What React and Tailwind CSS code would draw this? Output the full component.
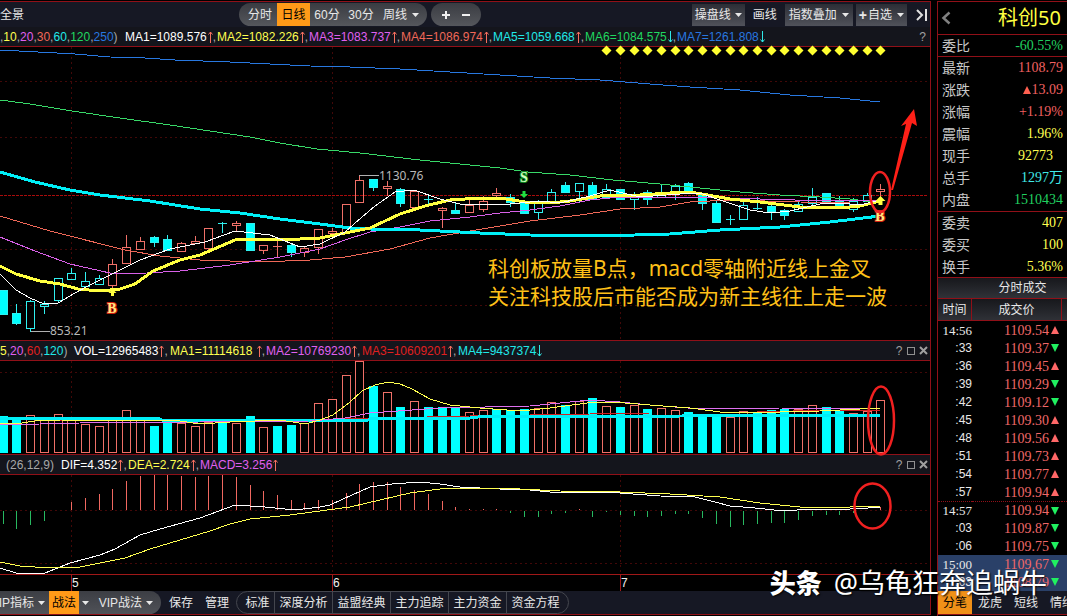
import React, { useState } from "react";

const STEP = 13.714;
const barX = (i) => Math.round(2.7 + STEP * i);

// [kind, high, top, bottom, low]  r = hollow red, c = hollow cyan, C = solid cyan
const candles = [
  ["C", 290, 290, 314, 314], ["C", 304, 313, 323, 324], ["c", 300, 301, 328, 331], ["c", 301, 304, 306, 313],
  ["c", 278, 278, 300, 302], ["c", 268, 273, 279, 279], ["c", 272, 281, 286, 287], ["c", 275, 278, 284, 284],
  ["r", 259, 264, 285, 287], ["r", 235, 247, 263, 263], ["r", 237, 241, 249, 249], ["C", 236, 237, 242, 246],
  ["C", 235, 239, 250, 250], ["r", 242, 243, 251, 251], ["r", 236, 241, 243, 243], ["r", 228, 228, 248, 249],
  ["c", 222, 223, 223, 232], ["r", 221, 223, 225, 230], ["C", 223, 223, 250, 250], ["r", 245, 245, 250, 253],
  ["r", 240, 246, 246, 256], ["C", 243, 245, 252, 256], ["r", 247, 248, 252, 256], ["r", 229, 229, 247, 253],
  ["r", 228, 231, 233, 235], ["r", 204, 204, 232, 232], ["r", 175, 180, 202, 202], ["C", 179, 179, 187, 190],
  ["r", 181, 186, 188, 195], ["C", 188, 189, 203, 206], ["r", 191, 191, 207, 207], ["c", 196, 199, 199, 203],
  ["r", 207, 208, 210, 227], ["C", 203, 210, 213, 213], ["r", 197, 205, 212, 212], ["r", 196, 201, 209, 211],
  ["r", 188, 193, 195, 199], ["C", 194, 197, 202, 206], ["C", 201, 201, 213, 213], ["c", 200, 203, 212, 218],
  ["c", 189, 192, 201, 201], ["C", 182, 185, 192, 192], ["c", 183, 183, 191, 201], ["C", 182, 185, 199, 199],
  ["c", 184, 189, 197, 197], ["C", 189, 189, 199, 199], ["c", 192, 195, 199, 209], ["C", 190, 192, 199, 204],
  ["c", 184, 192, 197, 197], ["c", 184, 186, 191, 199], ["C", 182, 183, 191, 191], ["C", 193, 193, 203, 209],
  ["C", 201, 203, 222, 222], ["c", 215, 219, 219, 224], ["c", 202, 205, 219, 219], ["c", 197, 208, 208, 209],
  ["C", 204, 206, 211, 219], ["C", 209, 210, 215, 219], ["c", 202, 204, 211, 211], ["c", 188, 197, 203, 207],
  ["C", 193, 193, 201, 201], ["C", 196, 201, 208, 208], ["c", 198, 201, 209, 211], ["c", 193, 195, 201, 201],
  ["r", 184, 189, 191, 196],
];

const volumes = [
  [416, 1], [419, 1], [415, 0], [420, 0], [414, 0], [420, 0], [424, 0], [426, 0], [420, 0], [410, 0], [420, 0],
  [426, 1], [422, 1], [423, 0], [426, 0], [422, 0], [422, 1], [423, 0], [416, 1], [427, 0], [426, 1], [425, 1],
  [423, 0], [403, 0], [399, 0], [375, 0], [361, 0], [386, 1], [392, 0], [407, 1], [401, 0], [407, 1], [407, 1],
  [408, 1], [412, 0], [410, 0], [409, 1], [410, 1], [409, 1], [408, 0], [402, 0], [405, 1], [401, 0], [398, 1],
  [406, 0], [407, 1], [405, 0], [409, 1], [408, 0], [410, 0], [412, 1], [414, 1], [415, 1], [417, 0], [411, 0],
  [413, 1], [410, 1], [409, 1], [409, 0], [405, 0], [407, 1], [411, 1], [413, 0], [411, 0], [400, 0],
];

// end of every MACD stick, zero axis is 510
const sticks = [
  524, 529, 525, 521, 510, 502, 498, 494, 489, 481, 476, 475, 475, 476, 477, 476, 475, 477, 485, 491, 495, 500, 503,
  500, 500, 493, 484, 482, 482, 487, 490, 494, 501, 507, 509, 509, 509, 513, 517, 517, 514, 513, 509, 517, 512, 515,
  516, 517, 516, 514, 514, 518, 524, 527, 525, 524, 523, 523, 520, 516, 515, 515, 513, 510, 507,
];

const quotes = [
  ["最新", "1108.79", "text-[#f06060]"],
  ["涨跌", "13.09", "text-[#f06060]", true],
  ["涨幅", "+1.19%", "text-[#f06060]"],
  ["震幅", "1.96%", "text-[#ffff50]"],
  ["现手", "92773", "text-[#ffff50] pr-[10px]"],
  ["总手", "1297万", "text-[#40e8e8]"],
  ["内盘", "1510434", "text-[#20d060]"],
];

const orders = [
  ["委卖", "407"],
  ["委买", "100"],
  ["换手", "5.36%"],
];

const trades = [
  ["14:56", "1109.54", true], [":33", "1109.37"], [":36", "1109.45", true], [":39", "1109.29"], [":42", "1109.12"],
  [":45", "1109.30", true], [":48", "1109.56", true], [":51", "1109.73", true], [":54", "1109.77", true],
  [":57", "1109.94", true], ["14:57", "1109.94"], [":03", "1109.87"], [":06", "1109.75"], ["15:00", "1109.67"],
  [":03", "1108.79"],
];

const UI = "font-['Liberation_Sans','Noto_Sans_CJK_SC',sans-serif]";
const NUM = "font-['Liberation_Serif','Noto_Sans_CJK_SC',serif]";

const Caret = () => (
  <svg className="w-[7px] h-[4px] shrink-0" viewBox="0 0 7 4" fill="#e8e8e8">
    <path d="M0 0H7L3.5 4Z" />
  </svg>
);

const Arrow = ({ down }) => (
  <svg className="w-[5px] h-[12px] ml-px shrink-0" viewBox="0 0 5 12" fill="none" stroke={down ? "#30e8e8" : "#f87060"}>
    <path d={down ? "M2.5 0V11M0.5 8.5L2.5 11L4.5 8.5" : "M2.5 12V1M0.5 3.5L2.5 1L4.5 3.5"} />
  </svg>
);

const Indicator = ({ text, color, down, last, width = "" }) => (
  <span className={`flex items-center whitespace-nowrap ${width}`}>
    <span className={color}>{text}</span>
    <Arrow down={down} />
    {!last && <span className="text-[#b0b0b0]">,</span>}
  </span>
);

const PanelIcons = () => (
  <div className="ml-auto flex items-center gap-1 pr-[2px] text-[#a0a0a0]">
    <button aria-label="帮助" className="text-xs leading-none w-[8px]">?</button>
    <button aria-label="最大化" className="border border-[#909090] w-[8px] h-[8px]"></button>
    <button aria-label="关闭">
      <svg className="w-[9px] h-[9px]" viewBox="0 0 9 9" stroke="#a0a0a0" strokeWidth="2">
        <path d="M1 1L8 8M8 1L1 8" />
      </svg>
    </button>
  </div>
);

const Grid = ({ top, bottom, rows }) => (
  <g stroke="#420808" strokeDasharray="2 3" shapeRendering="crispEdges">
    {[71, 332, 620].map((x) => (
      <line key={x} x1={x + 0.5} x2={x + 0.5} y1={top} y2={bottom} />
    ))}
    {rows.map((y) => (
      <line key={y} x1="0" x2="928" y1={y + 0.5} y2={y + 0.5} />
    ))}
  </g>
);

const Line = ({ points, color, width = 1 }) => (
  <polyline points={points} fill="none" stroke={color} strokeWidth={width} strokeLinejoin="round" shapeRendering="crispEdges" />
);

const PriceChart = () => (
  <svg className="block w-full h-auto overflow-visible" viewBox="0 47 930 293" role="img" aria-label="日线">
    <Grid top={47} bottom={340} rows={[81, 137, 249, 305]} />
    <path d="M0 195.5H928" stroke="#a80c0c" strokeDasharray="3 1" shapeRendering="crispEdges" />

    {candles.map(([kind, high, top, bottom, low], i) => {
      const x = barX(i);
      const color = kind === "r" ? "#f07068" : "#30f0f0";
      return (
        <g key={i} stroke={color} shapeRendering="crispEdges">
          <path d={`M${x + 0.5} ${high}V${top}M${x + 0.5} ${bottom}V${low + 1}`} />
          {bottom - top < 1 ? (
            <path d={`M${x - 4} ${top + 0.5}H${x + 5}M${x + 0.5} ${top}V${bottom + 1}`} />
          ) : (
            <rect x={x - 3.5} y={top + 0.5} width="8" height={bottom - top} fill={kind === "C" ? "#00ffff" : "none"} />
          )}
        </g>
      );
    })}

    <Line color="#2878e0" points="0,50 38,52 75,54 110,57 145,58 175,60 230,62 270,64 310,66 350,67 400,69 450,72 500,75 550,78 600,80 650,84 690,87 740,90 790,95 840,98 880,102" />
    <Line color="#38d868" points="0,100 30,104 72,111 120,118 170,125 250,137 280,143 317,149 360,153 420,160 500,168 528,172 570,175 613,180 660,184 700,188 740,192 780,195 820,197 850,199 880,203" />
    <Line color="#f06858" points="0,216 50,231 125,250 160,256 200,260 260,262 310,260 345,257 390,249 430,238 470,231 530,221 580,215 620,209 660,207 690,202 730,200 800,202 850,203 880,203" />
    <Line color="#d860e8" points="0,237 35,251 70,264 110,273 130,274 180,271 230,265 280,257 320,249 345,240 370,232 400,227 430,221 470,217 500,213 530,210 560,206 590,200 620,197 700,197 760,199 830,201 880,200" />
    <Line color="#00f0f8" width={3} points="0,172 35,182 70,190 100,195 150,201 200,209 240,213 280,219 320,224 350,228 370,229 420,230 440,231 480,233 530,235 600,236 670,234 720,230 780,227 830,222 880,216" />
    <Line color="#ffff40" width={3} points="0,266 16,274 40,281 60,284 78,289 100,291 120,289 135,284 153,271 180,260 200,255 235,240 250,239 280,240 320,238 345,233 370,228 400,214 425,206 450,200 480,198 500,198 525,202 550,203 570,201 600,196 640,195 670,193 690,192 702,194 730,199 760,202 800,207 840,208 860,206 880,201" />
    <Line color="#ffffff" points="0,274 16,290 30,298 44,304 58,303 75,293 90,285 110,275 140,260 170,249 205,242 235,231 270,235 300,247 320,244 345,232 354,224 375,206 395,192 414,190 440,199 460,204 510,204 540,201 560,203 590,196 610,190 640,197 680,194 700,193 720,200 750,210 770,213 790,211 820,204 840,203 860,205 880,200" />

    {/* signal diamonds */}
    {Array.from({ length: 21 }, (_, k) => barX(44 + k)).map((x) => (
      <path key={x} d={`M${x + 0.5} 45.5l5 5l-5 5l-5 -5Z`} fill="#ffff30" />
    ))}

    <g stroke="#b0b0b0" shapeRendering="crispEdges">
      <path d="M359 175.5H379M31 331.5H50" />
    </g>
    <g fill="#b8b8b8" className="text-xs font-['Noto_Sans',sans-serif]">
      <text x="379" y="180">1130.76</text>
      <text x="50" y="335">853.21</text>
    </g>

    <path d="M524 198l-4 -4h2.500v-3h3v3h2.500Z" fill="#20e040" />
    <path d="M112.500 289l4 4h-2.500v3h-3v-3h-2.500ZM880.500 196l5 5h-3v4h-4v-4h-3Z" fill="#ffff40" />
    <g textAnchor="middle" strokeWidth="2" paintOrder="stroke" className="text-sm font-bold font-['Liberation_Serif',serif]">
      <text x="524" y="182" fill="#d0ffc0" stroke="#108820">S</text>
      <text x="112" y="313" fill="#ffe880" stroke="#d02010">B</text>
      <text x="880" y="221" fill="#ffe880" stroke="#d02010">B</text>
    </g>

    <g fill="#ffc018" className="text-[21px] font-['Noto_Sans','Noto_Sans_CJK_SC',sans-serif]">
      <text x="488" y="276">科创板放量B点，macd零轴附近线上金叉</text>
      <text x="488" y="304">关注科技股后市能否成为新主线往上走一波</text>
    </g>

    <ellipse cx="880" cy="192" rx="10" ry="20" fill="none" stroke="#f02020" strokeWidth="2.5" />
    <path d="M891 190L906 124L901 126L914 109L917 126L912 123L893 190Z" fill="#ff2018" />
  </svg>
);

const VolumeChart = () => (
  <svg className="block w-full h-auto overflow-visible" viewBox="0 361 930 93" role="img" aria-label="VOL">
    <Grid top={361} bottom={454} rows={[372]} />
    {volumes.map(([top, solid], i) => (
      <rect
        key={i}
        x={barX(i) - 3.5}
        y={top + 0.5}
        width="8"
        height={452 - top}
        fill={solid ? "#00ffff" : "#000"}
        stroke={solid ? "#00ffff" : "#f07068"}
        shapeRendering="crispEdges"
      />
    ))}
    <Line color="#d02020" points="50,420 310,420 340,419 470,416 650,413 720,413 830,410 880,410" />
    <Line color="#00f0f8" width={3} points="0,418 158,418 162,420 368,420 372,418 470,418 478,417 682,416 690,415 880,415" />
    <Line color="#e070f0" points="0,425 80,423 200,422 310,421 345,418 370,413 440,408 530,406 560,403 590,400 620,402 650,405 700,409 780,408 880,409" />
    <Line color="#ffff50" points="0,423 15,424 35,421 60,420 180,421 200,424 230,422 280,420 305,424 320,420 333,415 350,402 362,391 375,385 388,382 400,384 412,389 430,399 450,405 480,408 520,411 550,408 595,402 625,403 650,405 690,408 720,412 780,412 820,411 880,408" />
    <ellipse cx="881" cy="420.500" rx="13" ry="34" fill="none" stroke="#f02020" strokeWidth="2.5" />
  </svg>
);

const MacdChart = () => (
  <svg className="block w-full h-auto overflow-visible" viewBox="0 475 930 116" role="img" aria-label="MACD">
    <Grid top={475} bottom={574} rows={[510, 563]} />
    {sticks.map((y, i) => (
      <path key={i} d={`M${barX(i) + 0.5} ${y > 510 ? 511 : 510}V${y}`} stroke={y > 510 ? "#28b860" : "#f06860"} shapeRendering="crispEdges" />
    ))}
    <Line color="#ffffff" points="0,568 16,573 45,573 70,563 100,555 115,549 140,535 160,529 200,518 235,505 265,507 295,510 320,507 330,505 343,499 370,487 392,484 420,482 440,484 460,487 500,489 530,490 560,493 590,492 620,493 660,496 695,497 715,502 730,506 755,508 784,511 810,509 850,509 868,508 880,507" />
    <Line color="#ffff50" points="0,562 20,566 50,568 80,567 105,562 125,558 150,549 180,540 210,531 230,524 250,519 290,515 320,511 350,507 380,500 410,493 440,489 500,488 560,491 620,492 670,494 720,497 760,503 800,507 850,507 880,506" />
    <path d="M0 574.500H930M71.500 575V591M332.500 575V591M620.500 575V591" stroke="#a01818" shapeRendering="crispEdges" />
    <g fill="#f0f0f0" className={`text-xs ${UI}`}>
      <text x="72" y="587">5</text>
      <text x="333" y="587">6</text>
      <text x="621" y="587">7</text>
    </g>
    <ellipse cx="872.500" cy="506" rx="18" ry="22.500" fill="none" stroke="#f02020" strokeWidth="2.5" />
  </svg>
);

const TopBar = () => {
  const [period, setPeriod] = useState("日线");
  const grey = "flex items-center h-[22px] bg-linear-to-b from-[#2c2e36] to-[#50525a]";

  return (
    <div className="flex items-center h-[25px] bg-[#161824]">
      <span className="w-[239px]">全景</span>
      <div className="flex items-center h-[23px] pl-1 pr-2 rounded-full bg-linear-to-b from-[#3a3c42] to-[#55575c] overflow-hidden">
        {["分时", "日线", "60分", "30分"].map((name) => (
          <button
            key={name}
            onClick={() => setPeriod(name)}
            className={`h-full whitespace-nowrap ${period === name ? "w-[33px] bg-[#ff9a18] text-black" : "w-[34px]"}`}
          >
            {name}
          </button>
        ))}
        <button className="flex items-center gap-[5px] pl-[5px]" aria-haspopup="true">
          周线 <Caret />
        </button>
      </div>
      <div className="flex items-center justify-center gap-2 ml-1 w-[50px] h-[23px] rounded-full bg-linear-to-b from-[#3a3c42] to-[#55575c]">
        <button aria-label="放大">
          <svg className="w-3 h-3" viewBox="0 0 12 12" stroke="#f0f0f0" strokeWidth="2">
            <path d="M2 6H10M6 2V10" />
          </svg>
        </button>
        <button aria-label="缩小">
          <svg className="w-3 h-3" viewBox="0 0 12 12" stroke="#f0f0f0" strokeWidth="2">
            <path d="M2 6H10" />
          </svg>
        </button>
      </div>
      <div className="ml-auto flex items-center gap-[3px] pr-[2px]">
        <button className={`${grey} gap-1 px-[3px]`} aria-haspopup="true">操盘线 <Caret /></button>
        <button className="px-[5px]">画线</button>
        <button className={`${grey} gap-[5px] px-1`} aria-haspopup="true">指数叠加 <Caret /></button>
        <button className={`${grey} gap-[5px] px-[3px]`} aria-haspopup="true">
          <span className="flex items-center gap-px"><b className="text-sm">+</b>自选</span> <Caret />
        </button>
        <button aria-label="收起" className="ml-1">
          <svg className="w-[14px] h-[14px]" viewBox="0 0 14 14" fill="none" stroke="#e0e0e0" strokeWidth="2">
            <path d="M3 2L8 7L3 12M12 1V13" />
          </svg>
        </button>
      </div>
    </div>
  );
};

const BottomBar = () => (
  <div className="flex items-center h-[23px] bg-[#161824] border-b border-[#901018] box-content">
    <div className="flex items-center h-full w-[161px] pr-2 rounded-r-full bg-linear-to-b from-[#3c3e44] to-[#505258] whitespace-nowrap">
      <button className="flex items-center gap-1 h-full w-[49px] justify-end pr-1 shrink-0" aria-haspopup="true">IP指标 <Caret /></button>
      <button className="h-full w-[30px] shrink-0 bg-[#ff9a18] text-black">战法</button>
      <button className="px-[3px]" aria-label="战法菜单"><Caret /></button>
      <button className="flex items-center gap-1 pl-1 ml-auto" aria-haspopup="true">VIP战法 <Caret /></button>
    </div>
    <button className="ml-2">保存</button>
    <button className="ml-3">管理</button>
    <div className="flex items-center h-full ml-[7px] rounded-full border border-[#44464e] whitespace-nowrap">
      <button className="h-full w-[37px] pl-1">标准</button>
      {["深度分析", "益盟经典", "主力追踪", "主力资金", "资金方程"].map((name) => (
        <button key={name} className="h-full w-[58px] border-l border-[#44464e] last:w-[62px] last:pr-1">
          {name}
        </button>
      ))}
    </div>
  </div>
);

const Quote = ({ label, value, color, up }) => (
  <div className="flex items-center justify-between h-[22px] pl-1 pr-1">
    <dt className="text-[#c8c8c8]">{label}</dt>
    <dd className={`flex items-center ${NUM} ${color}`}>
      {up && (
        <svg className="w-[8px] h-[8px] mr-px" viewBox="0 0 8 8" fill="#ff6050">
          <path d="M4 0L8 8H0Z" />
        </svg>
      )}
      {value}
    </dd>
  </div>
);

const SidePanel = () => (
  <aside className="flex flex-col w-[130px] shrink-0 mt-px border-t border-l border-[#901018] overflow-hidden">
    <div className="flex items-center justify-between h-[33px] pl-[3px] pr-[6px] border-b border-[#901018]">
      <button aria-label="返回">
        <svg className="w-[10px] h-[14px]" viewBox="0 0 10 14" fill="none" stroke="#808080" strokeWidth="2.500">
          <path d="M8.500 1.500L2.500 7L8.500 12.500" />
        </svg>
      </button>
      <h1 className="text-[20px] leading-none text-[#ffff40] font-['Noto_Sans','Noto_Sans_CJK_SC',sans-serif]">科创50</h1>
    </div>

    <dl className="text-sm leading-none">
      <div className="border-b border-[#901018] h-[22px]">
        <Quote label="委比" value="-60.55%" color="text-[#20d060]" />
      </div>
      {quotes.map(([label, value, color, up]) => (
        <Quote key={label} label={label} value={value} color={color} up={up} />
      ))}
      <div className="border-t border-[#901018] h-[66px]">
        {orders.map(([label, value]) => (
          <Quote key={label} label={label} value={value} color="text-[#ffff50]" />
        ))}
      </div>
    </dl>

    <h2 className="h-[22px] border-y border-[#901018] pl-[40px] text-center text-xs leading-[20px] bg-linear-to-b from-[#17181c] to-[#303238]">
      分时成交
    </h2>
    <table className="w-full table-fixed border-separate border-spacing-0">
      <thead>
        <tr className="h-[22px] bg-linear-to-b from-[#17181c] to-[#303238]">
          <th className="w-[34px] p-0 font-normal border-b border-r border-[#901018]">时间</th>
          <th className="p-0 font-normal border-b border-r border-[#901018]">成交价</th>
          <th className="w-[5px] p-0 border-b border-[#901018]"></th>
        </tr>
      </thead>
      <tbody>
        {trades.map(([time, price, up], i) => (
          <tr key={i} className={i > 12 ? "bg-[#2a4068]" : ""}>
            <td className={`h-[18px] p-0 leading-[17px] text-right ${time[0] === ":" ? "" : NUM + " text-[13px]"} ${i === 10 ? "border-t border-dotted border-[#901018]" : ""}`}>
              {time}
            </td>
            <td className={`h-[18px] p-0 leading-[17px] ${i === 10 ? "border-t border-dotted border-[#901018]" : ""}`}>
              <span className={`flex items-center justify-end gap-[2px] pr-[3px] text-sm leading-[17px] text-[#f06868] ${NUM}`}>
                {price}
                <svg className="w-[8px] h-[8px]" viewBox="0 0 8 8" fill={up ? "#ff6868" : "#20f060"}>
                  <path d={up ? "M4 0L8 8H0Z" : "M0 0H8L4 8Z"} />
                </svg>
              </span>
            </td>
            <td className={i === 10 ? "border-t border-dotted border-[#901018]" : ""}></td>
          </tr>
        ))}
      </tbody>
    </table>

    <div className="flex items-center h-[24px] border-b border-[#901018] bg-[#161824] whitespace-nowrap">
      <button className="h-full w-[34px] shrink-0 bg-[#f09018] text-black">分笔</button>
      {["龙虎", "短线", "情绪"].map((name) => (
        <button key={name} className="w-[36px] shrink-0">{name}</button>
      ))}
    </div>
  </aside>
);

const App = () => {
  return (
    <div className={`relative flex min-h-screen gap-[6px] overflow-hidden bg-black text-xs text-[#e8e8e8] ${UI}`}>
      <main className="flex-1 min-w-0 mt-px border-t border-r border-[#901018] self-start">
        <TopBar />
        <div className="flex items-center h-[20px] bg-[#14151c] border-b border-[#901018] whitespace-nowrap">
          <span className="w-[125px] shrink-0 text-[#a8a8a8]">
            ,<span className="text-[#ffff50]">10</span>,<span className="text-[#e060f0]">20</span>,
            <span className="text-[#f06858]">30</span>,<span className="text-[#20e8e8]">60</span>,
            <span className="text-[#20d860]">120</span>,<span className="text-[#2878e0]">250</span>)
          </span>
          <Indicator width="w-[92px]" text="MA1=1089.576" color="text-white" />
          <Indicator width="w-[92px]" text="MA2=1082.226" color="text-[#ffff50]" />
          <Indicator width="w-[92px]" text="MA3=1083.737" color="text-[#e060f0]" />
          <Indicator width="w-[92px]" text="MA4=1086.974" color="text-[#f06858]" />
          <Indicator width="w-[92px]" text="MA5=1059.668" color="text-[#20e8e8]" />
          <Indicator width="w-[92px]" text="MA6=1084.575" color="text-[#20d860]" down />
          <Indicator text="MA7=1261.808" color="text-[#2878e0]" down last />
          <button aria-label="帮助" className="ml-auto pr-1 text-[#a0a0a0]">?</button>
        </div>
        <PriceChart />

        <div className="flex items-center h-[21px] bg-[#14151c] border-y border-[#901018] whitespace-nowrap">
          <span className="w-[74px] shrink-0 text-[#a8a8a8]">
            <span className="text-[#ffff50]">5</span>,<span className="text-[#e060f0]">20</span>,
            <span className="text-[#e02020]">60</span>,<span className="text-[#20e8e8]">120</span>)
          </span>
          <Indicator width="w-[96px]" text="VOL=12965483" color="text-white" />
          <Indicator width="w-[96px]" text={"MA1=11114618\u00a0"} color="text-[#ffff50]" />
          <Indicator width="w-[96px]" text="MA2=10769230" color="text-[#e060f0]" />
          <Indicator width="w-[96px]" text="MA3=10609201" color="text-[#e02020]" />
          <Indicator text="MA4=9437374" color="text-[#20e8e8]" down last />
          <PanelIcons />
        </div>
        <VolumeChart />

        <div className="flex items-center h-[21px] bg-[#14151c] border-y border-[#901018] whitespace-nowrap">
          <span className="w-[61px] pl-[6px] shrink-0 text-[#a8a8a8]">(26,12,9)</span>
          <Indicator width="w-[67px]" text="DIF=4.352" color="text-white" />
          <Indicator width="w-[72px]" text="DEA=2.724" color="text-[#ffff50]" />
          <Indicator text="MACD=3.256" color="text-[#e060f0]" last />
          <PanelIcons />
        </div>
        <MacdChart />
        <BottomBar />
      </main>

      <SidePanel />

      {/* author tag laid over both columns */}
      <div className="absolute right-[20px] bottom-[20px] flex items-center gap-3 leading-none whitespace-nowrap text-white text-shadow-[1px_1px_2px_#000] pointer-events-none font-['Noto_Sans','Noto_Sans_CJK_SC',sans-serif]">
        <b className="text-[26px] font-black">头条</b>
        <span className="text-[27px]">@乌龟狂奔追蜗牛</span>
      </div>
    </div>
  );
};

export default App;
